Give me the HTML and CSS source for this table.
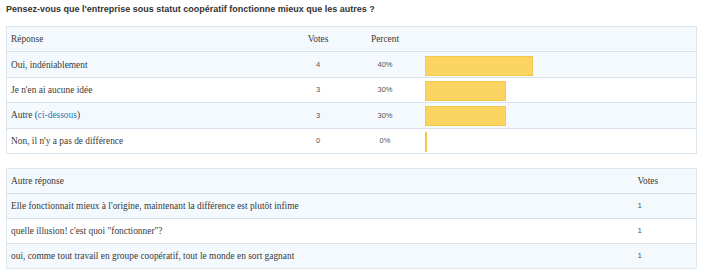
FILE: index.html
```html
<!DOCTYPE html>
<html lang="fr">
<head>
<meta charset="utf-8">
<title>Sondage</title>
<link rel="stylesheet" href="styles.css">
</head>
<body>
<div class="poll">
  <h3 class="question">Pensez-vous que l'entreprise sous statut coopératif fonctionne mieux que les autres ?</h3>
  <table class="results">
    <colgroup>
      <col class="c-answer"><col class="c-votes"><col class="c-pct"><col class="c-bar">
    </colgroup>
    <tr class="odd head">
      <th class="answer">Réponse</th>
      <th class="votes">Votes</th>
      <th class="pct">Percent</th>
      <th class="bar"></th>
    </tr>
    <tr class="odd">
      <td class="answer">Oui, indéniablement</td>
      <td class="votes num">4</td>
      <td class="pct num">40%</td>
      <td class="bar"><div class="fill" style="width:40%"></div></td>
    </tr>
    <tr class="even">
      <td class="answer">Je n'en ai aucune idée</td>
      <td class="votes num">3</td>
      <td class="pct num">30%</td>
      <td class="bar"><div class="fill" style="width:30%"></div></td>
    </tr>
    <tr class="odd">
      <td class="answer">Autre (<a href="#autres">ci-dessous</a>)</td>
      <td class="votes num">3</td>
      <td class="pct num">30%</td>
      <td class="bar"><div class="fill" style="width:30%"></div></td>
    </tr>
    <tr class="even">
      <td class="answer">Non, il n'y a pas de différence</td>
      <td class="votes num">0</td>
      <td class="pct num">0%</td>
      <td class="bar"><div class="fill zero"></div></td>
    </tr>
  </table>

  <table class="others" id="autres">
    <colgroup><col class="o-answer"><col class="o-votes"></colgroup>
    <tr class="odd head">
      <th class="answer">Autre réponse</th>
      <th class="ovotes">Votes</th>
    </tr>
    <tr class="odd">
      <td class="answer">Elle fonctionnait mieux à l'origine, maintenant la différence est plutôt infime</td>
      <td class="ovotes num">1</td>
    </tr>
    <tr class="even">
      <td class="answer">quelle illusion! c'est quoi "fonctionner"?</td>
      <td class="ovotes num">1</td>
    </tr>
    <tr class="odd">
      <td class="answer">oui, comme tout travail en groupe coopératif, tout le monde en sort gagnant</td>
      <td class="ovotes num">1</td>
    </tr>
  </table>
</div>
</body>
</html>
```

FILE: styles.css
```css
html, body {
  margin: 0;
  padding: 0;
  background: #ffffff;
}

.poll {
  padding: 0 5px 0 6px;
  font-family: "Liberation Serif", serif;
  color: #3a3a3a;
}

.question {
  margin: 0;
  padding-top: 3px;
  height: 23px;
  font-family: "Liberation Sans", Arial, sans-serif;
  font-size: 9px;
  font-weight: bold;
  line-height: 12px;
  color: #333333;
}

table {
  width: 100%;
  border-collapse: collapse;
  table-layout: fixed;
  border: 1px solid #dbe8f1;
}

tr {
  height: 25px;
}

.results tr {
  height: 25.4px;
}

tr.odd {
  background: #f4f9fd;
}

tr.even {
  background: #ffffff;
}

tr + tr td,
tr + tr th {
  border-top: 1px solid #d9e2ec;
}

th, td {
  padding: 0;
  font-size: 9.4px;
  font-weight: normal;
  text-align: left;
  vertical-align: middle;
  white-space: nowrap;
}

.answer {
  padding-left: 4px;
}

.c-answer { width: 284px; }
.c-votes { width: 55px; }
.c-pct { width: 79px; }

.votes, .pct {
  text-align: center;
}

.num {
  font-family: "Liberation Sans", Arial, sans-serif;
  font-size: 7.5px;
  color: #555555;
}

.bar {
  padding: 0;
}

.fill {
  height: 20px;
  margin-top: 2px;
  box-sizing: border-box;
  background: #fcd462;
  border: 1px solid #f4c84a;
}

.fill.zero {
  width: 2px;
  border: none;
  background: #f5c842;
}

a {
  color: #2b7bb5;
  text-decoration: none;
}

.others {
  margin-top: 14px;
}

.o-votes { width: 64px; }

.ovotes {
  padding-left: 5px;
}

.ovotes.num {
  font-size: 8px;
}
```
